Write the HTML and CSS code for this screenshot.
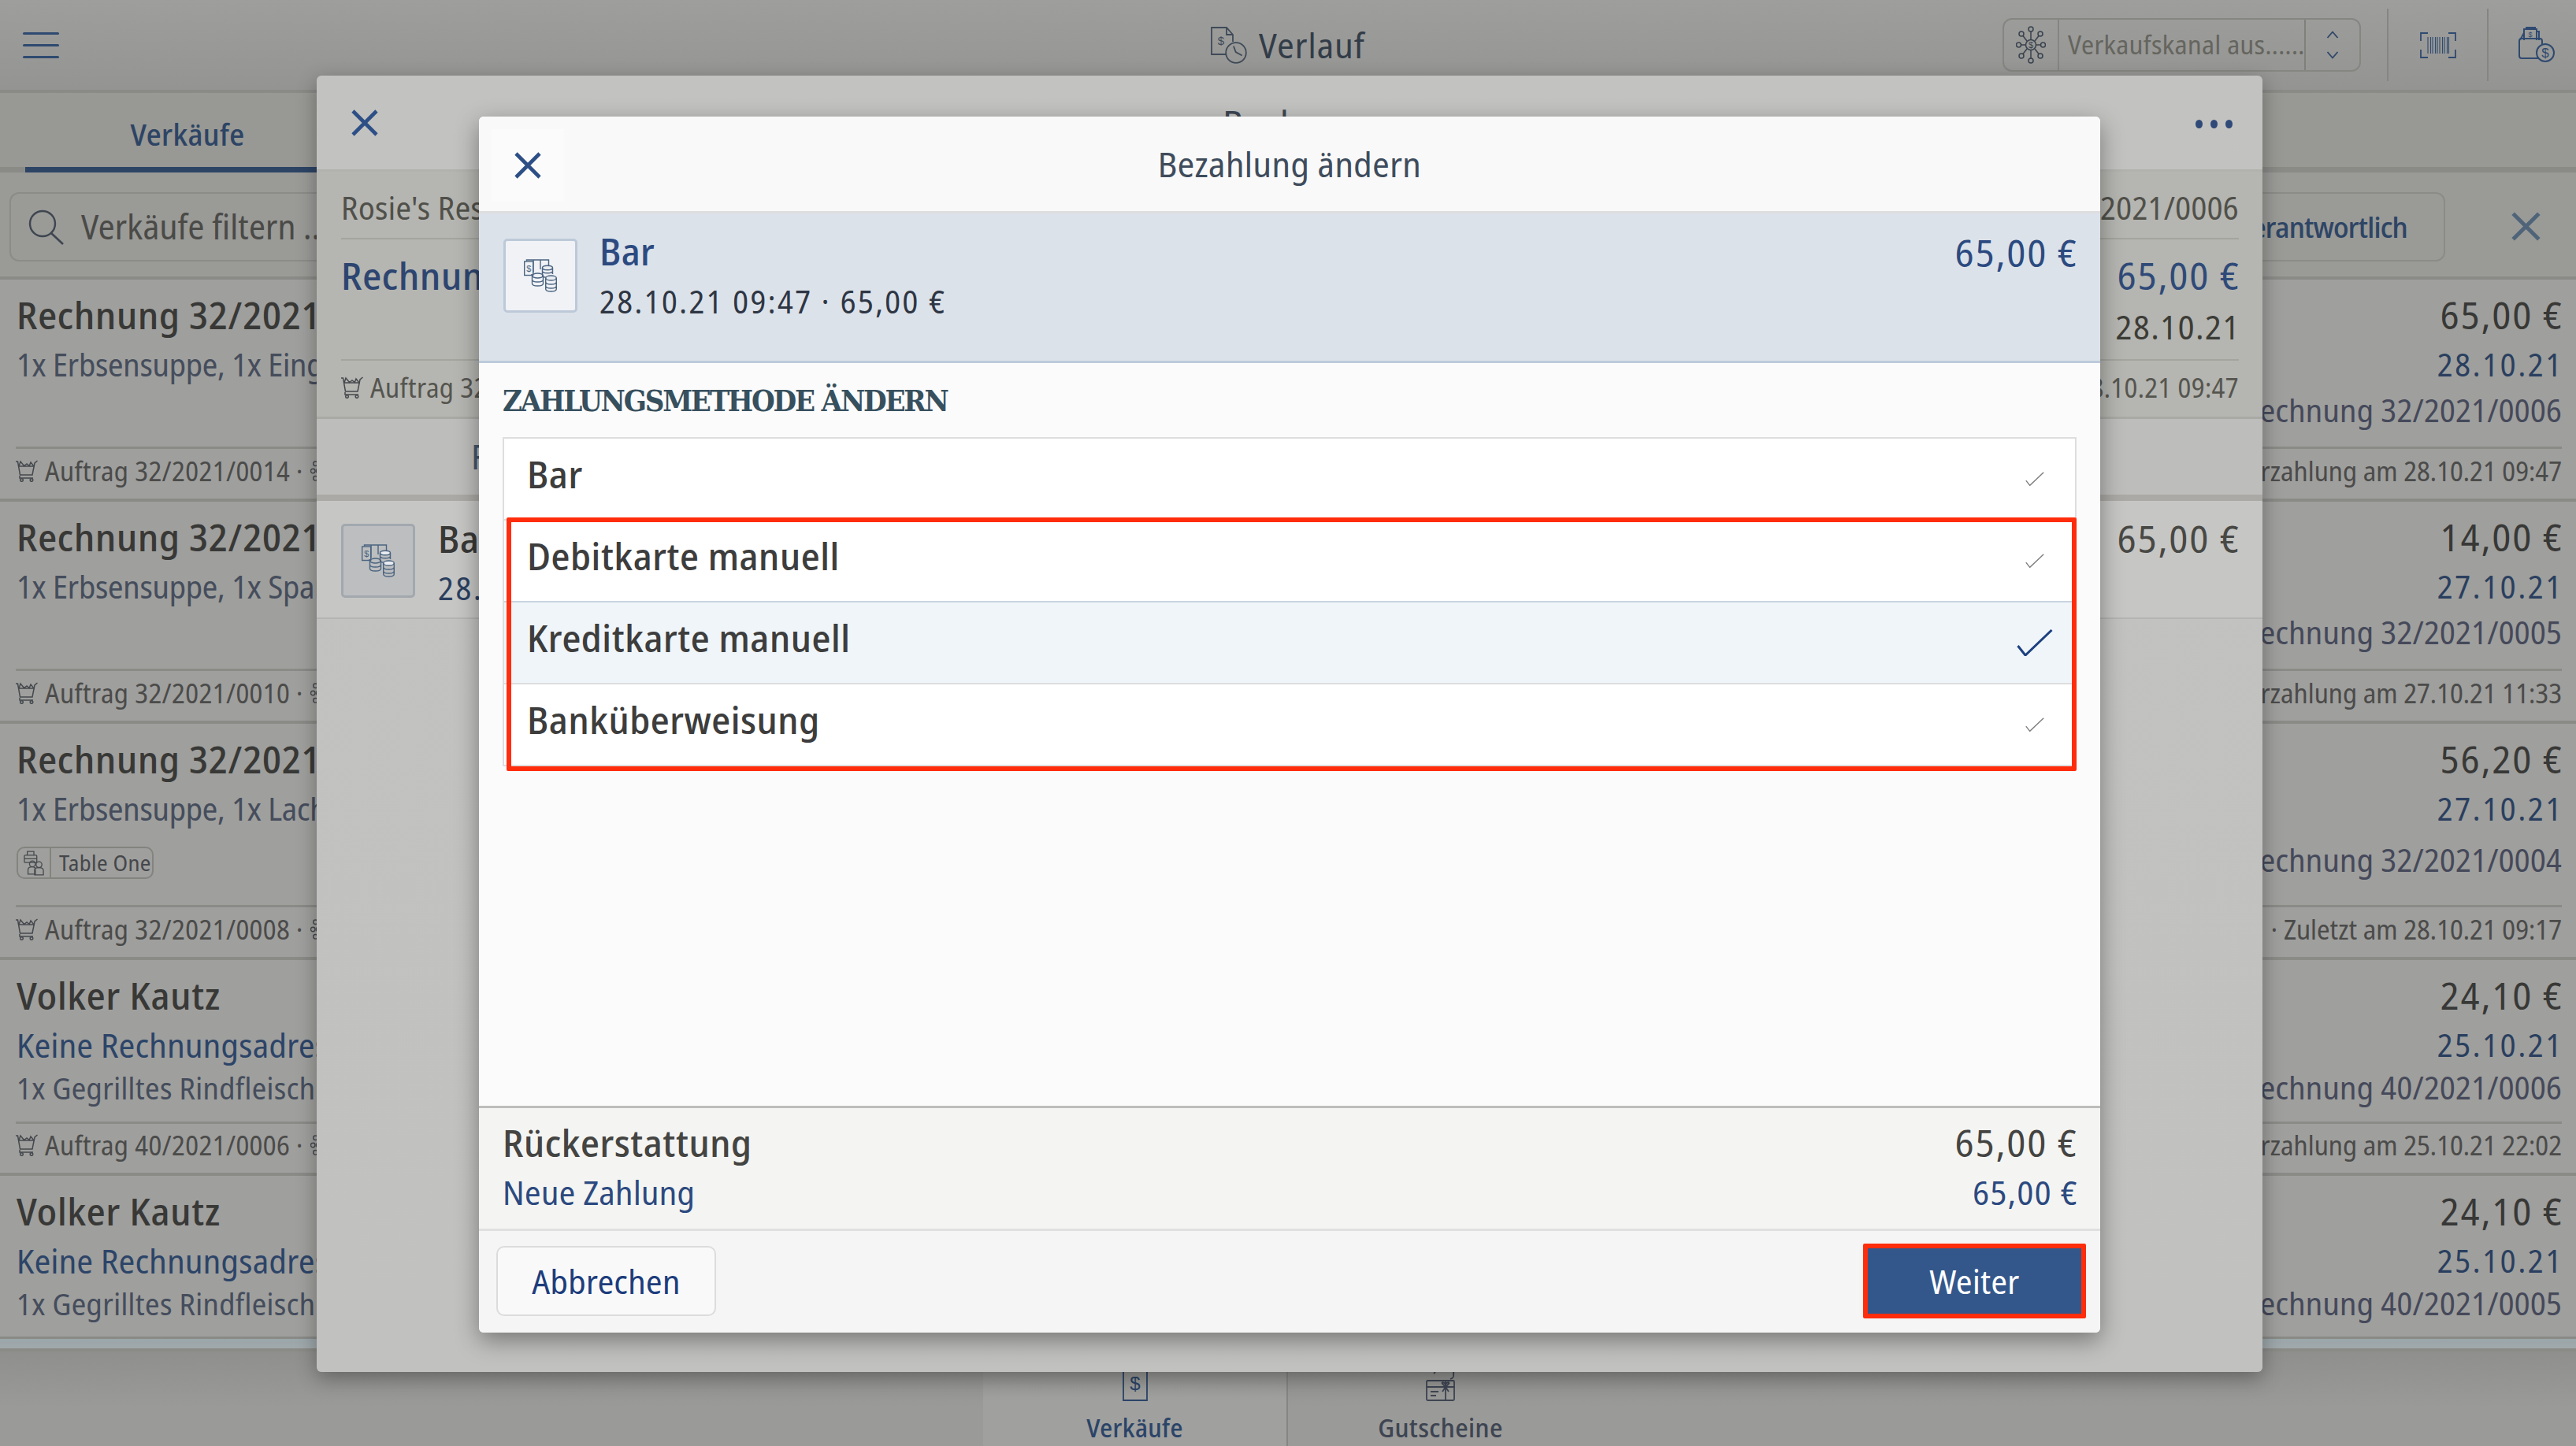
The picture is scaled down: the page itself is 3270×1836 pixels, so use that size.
FILE: index.html
```html
<!DOCTYPE html>
<html lang="de"><head><meta charset="utf-8"><title>Verlauf</title><link rel="stylesheet" href="styles.css"></head>
<body>
<svg class="defs" xmlns="http://www.w3.org/2000/svg">
  <symbol id="i-x" viewBox="0 0 34 34"><path d="M2 2 32 32M32 2 2 32" fill="none" stroke="currentColor" stroke-width="4.600"/></symbol>
  <symbol id="i-check" viewBox="0 0 46 34"><path d="M1.500 21 11 33 44.500 1" fill="none" stroke="currentColor" stroke-width="2.600"/></symbol>
  <symbol id="i-cash" viewBox="0 0 42 42">
    <g fill="none" stroke="currentColor" stroke-width="1.400">
      <path d="M3.500 2.500V1H31.500V10M11.500 20H9"/><path d="M12 1V17M21 1V13"/>
      <rect x="0.700" y="3" width="11" height="17.500"/>
      <ellipse cx="30" cy="11" rx="6.500" ry="2.800" fill="#e9ecf1"/><path d="M23.500 11V20.500C23.500 22 26 23.300 30 23.300M36.500 11V19M23.500 15C23.500 16.500 26 17.800 30 17.800S36.500 16.500 36.500 15"/>
      <ellipse cx="17.500" cy="21" rx="7" ry="3"/><path d="M10.500 21V31C10.500 33 13.500 34 17.500 34S24.500 33 24.500 31V21M10.500 26C10.500 28 13.500 29 17.500 29S24.500 28 24.500 26"/>
      <ellipse cx="34.500" cy="24" rx="6.800" ry="3" fill="#e9ecf1"/><path d="M27.700 24V38C27.700 40 30.500 41 34.500 41S41.300 40 41.300 38V24M27.700 29C27.700 31 30.500 32 34.500 32S41.300 31 41.300 29M27.700 34C27.700 36 30.500 37 34.500 37S41.300 36 41.300 34"/>
    </g>
    <text x="6.200" y="15.500" class="dollar" font-size="11" text-anchor="middle" fill="currentColor">$</text>
  </symbol>
  <symbol id="i-cart" viewBox="0 0 28 28">
    <g fill="none" stroke="currentColor" stroke-width="1.500"><path d="M0 2H2.500L5.500 19H21L24 4 27.500 1"/><path d="M3 8H24M5 20V23H22"/><circle cx="7.500" cy="25.500" r="1.800"/><circle cx="20" cy="25.500" r="1.800"/><path d="M4 8 6 2 11 8M10 8 14 5 18 8M17 8 19 3 23 8"/></g>
  </symbol>
  <symbol id="i-flow" viewBox="0 0 14 28"><g fill="none" stroke="currentColor" stroke-width="1.500"><circle cx="7" cy="4" r="3"/><circle cx="3.500" cy="14" r="3"/><circle cx="11" cy="14" r="3"/><circle cx="7" cy="24" r="3"/></g></symbol>
  <symbol id="i-table" viewBox="0 0 28 34"><g fill="none" stroke="currentColor" stroke-width="1.400"><rect x="1" y="6" width="17" height="10" rx="1"/><path d="M5 6V1H14V6M1 11H18"/><circle cx="12" cy="18" r="4"/><circle cx="21" cy="19" r="4"/><path d="M6 32V26C6 23 9 22 12 22S16 23 16 26V32ZM15 33V26C15 24 18 23 21 23S27 24 27 27V33Z"/></g></symbol>
  <symbol id="i-hub" viewBox="0 0 38 48"><g fill="none" stroke="currentColor" stroke-width="1.500"><circle cx="19" cy="24" r="6.500"/><circle cx="19" cy="4" r="3"/><circle cx="19" cy="44" r="3"/><circle cx="3.500" cy="24" r="3"/><circle cx="34.500" cy="24" r="3"/><circle cx="7" cy="10" r="3"/><circle cx="31" cy="10" r="3"/><circle cx="7" cy="38" r="3"/><circle cx="31" cy="38" r="3"/><path d="M19 7V17.500M19 30.500V41M6.500 24H12.500M25.500 24H31.500M9 12.500 14 19M29 12.500 24 19M9 35.500 14 29M29 35.500 24 29"/></g><text x="19" y="28" class="dollar" font-size="11" text-anchor="middle" fill="currentColor">$</text></symbol>
  <symbol id="i-wallet" viewBox="0 0 46 46"><g fill="none" stroke="currentColor" stroke-width="2"><path d="M7 17V3H23V17M10 3V1H22"/><rect x="1" y="15" width="29" height="25" rx="3"/><path d="M2 16C5 13 6 8 7 8M24 6H26V17"/><circle cx="34" cy="33" r="11" fill="#9a9a98"/></g><text x="34" y="39" class="dollar" font-size="17" text-anchor="middle" fill="currentColor">$</text><text x="15" y="13" class="dollar" font-size="9" text-anchor="middle" fill="currentColor">$</text></symbol>
  <symbol id="i-gift" viewBox="0 0 38 50"><g fill="none" stroke="currentColor" stroke-width="1.800"><rect x="1" y="24" width="35" height="25" rx="1.500"/><path d="M1 32H36M25 24V49M6 38H16M6 43H13M25 32 21 28C19 26 23 25 25 29 27 25 31 26 29 28ZM25 32 21 38M25 32 29 38"/><path d="M10 15C13 13 12 10 11 8M17 8H22M28 8V12M33 5C31 8 37 12 35 16 36 20 34 21 31 22"/></g></symbol>
</svg>
<div class="app">
  <header class="topbar">
    <div class="top-left"><span class="burger"><i></i><i></i><i></i></span></div>
    <div class="top-title">
      <svg class="ic-verlauf" viewBox="0 0 46 47"><g fill="none" stroke="currentColor" stroke-width="1.800"><path d="M19 35H1V1H20L28 10V19M20 1V10H28"/><circle cx="32" cy="33" r="12.800"/><path d="M32 24 32 32 38 39" transform="rotate(-20 32 33)"/></g><text x="13" y="23" class="dollar" font-size="15" text-anchor="middle" fill="currentColor">$</text></svg>
      <span>Verlauf</span>
    </div>
    <div class="top-right">
      <div class="channel">
        <span class="channel-ic"><svg class="ic-hub"><use href="#i-hub"/></svg></span>
        <span class="channel-txt">Verkaufskanal aus.......</span>
        <span class="channel-arrows"><svg class="ic-chev" viewBox="0 0 16 36"><path d="M1.500 9 8 1.500 14.500 9M1.500 27 8 34.500 14.500 27" fill="none" stroke="currentColor" stroke-width="1.800"/></svg></span>
      </div>
      <span class="top-cell top-cell-scan">
        <svg class="ic-scan" viewBox="0 0 46 33"><path d="M1 11V1H10M36 1H45V11M1 22V32H10M36 32H45V22" fill="none" stroke="currentColor" stroke-width="1.800"/><path d="M10 6V27M13.500 6V27M16 6V27M19.500 6V27M22 6V27M25 6V27M28.500 6V27M31 6V27M34.500 6V27M36.500 6V27" stroke="currentColor" stroke-width="1.100"/></svg>
      </span>
      <span class="top-cell top-cell-wallet"><svg class="ic-wallet"><use href="#i-wallet"/></svg></span>
    </div>
  </header>
  <nav class="tabs"><span class="tab">Verkäufe</span></nav>
  <div class="searchrow">
    <div class="search">
      <svg class="ic-search" viewBox="0 0 46 46"><circle cx="19" cy="19" r="16" fill="none" stroke="currentColor" stroke-width="2.400"/><path d="M30 31 45 45" stroke="currentColor" stroke-width="2.600"/></svg>
      <span>Verkäufe filtern ...</span>
    </div>
    <div class="search-right">
      <span class="owner">Verantwortlich</span>
      <svg class="ic-close-bg"><use href="#i-x"/></svg>
    </div>
  </div>

  <article class="row">
    <div class="row-top">
      <div class="col"><div class="t">Rechnung 32/2021/0006</div><div class="s">1x Erbsensuppe, 1x Eingelegter Lachs</div></div>
      <div class="col col-r"><div class="t">65,00 €</div><div class="s date">28.10.21</div><div class="s inv">Rechnung 32/2021/0006</div></div>
    </div>
    <div class="foot"><span class="foot-l"><svg class="ic-cart"><use href="#i-cart"/></svg>Auftrag 32/2021/0014 · <svg class="ic-flow"><use href="#i-flow"/></svg> Lieferung</span><span>Vorzahlung am 28.10.21 09:47</span></div>
  </article>
  <article class="row">
    <div class="row-top">
      <div class="col"><div class="t">Rechnung 32/2021/0005</div><div class="s">1x Erbsensuppe, 1x Spargelsuppe</div></div>
      <div class="col col-r"><div class="t">14,00 €</div><div class="s date">27.10.21</div><div class="s inv">Rechnung 32/2021/0005</div></div>
    </div>
    <div class="foot"><span class="foot-l"><svg class="ic-cart"><use href="#i-cart"/></svg>Auftrag 32/2021/0010 · <svg class="ic-flow"><use href="#i-flow"/></svg> Lieferung</span><span>Vorzahlung am 27.10.21 11:33</span></div>
  </article>
  <article class="row row-chip">
    <div class="row-top">
      <div class="col"><div class="t">Rechnung 32/2021/0004</div><div class="s">1x Erbsensuppe, 1x Lachs</div><div class="chip"><span class="chip-ic"><svg class="ic-table"><use href="#i-table"/></svg></span><span class="chip-txt">Table One</span></div></div>
      <div class="col col-r"><div class="t">56,20 €</div><div class="s date">27.10.21</div><div class="s inv inv-low">Rechnung 32/2021/0004</div></div>
    </div>
    <div class="foot"><span class="foot-l"><svg class="ic-cart"><use href="#i-cart"/></svg>Auftrag 32/2021/0008 · <svg class="ic-flow"><use href="#i-flow"/></svg> Lieferung</span><span>· Zuletzt am 28.10.21 09:17</span></div>
  </article>
  <article class="row row-cust">
    <div class="row-top">
      <div class="col"><div class="t">Volker Kautz</div><div class="s link">Keine Rechnungsadresse</div><div class="s items">1x Gegrilltes Rindfleisch</div></div>
      <div class="col col-r"><div class="t">24,10 €</div><div class="s date">25.10.21</div><div class="s items">Rechnung 40/2021/0006</div></div>
    </div>
    <div class="foot foot-tight"><span class="foot-l"><svg class="ic-cart"><use href="#i-cart"/></svg>Auftrag 40/2021/0006 · <svg class="ic-flow"><use href="#i-flow"/></svg> Lieferung</span><span>Vorzahlung am 25.10.21 22:02</span></div>
  </article>
  <article class="row row-last">
    <div class="row-top">
      <div class="col"><div class="t">Volker Kautz</div><div class="s link">Keine Rechnungsadresse</div><div class="s items">1x Gegrilltes Rindfleisch</div></div>
      <div class="col col-r"><div class="t">24,10 €</div><div class="s date">25.10.21</div><div class="s items">Rechnung 40/2021/0005</div></div>
    </div>
    <div class="strip"></div>
  </article>

  <nav class="bottomnav">
    <div class="nav-item nav-on">
      <svg class="ic-doc" viewBox="0 0 32 50"><path d="M1 1H24L31 8V49H1Z M24 1V8H31" fill="none" stroke="currentColor" stroke-width="1.800"/><text x="16" y="36" class="dollar" font-size="24" text-anchor="middle" fill="currentColor">$</text></svg>
      <span>Verkäufe</span>
    </div>
    <div class="nav-item">
      <svg class="ic-gift"><use href="#i-gift"/></svg>
      <span>Gutscheine</span>
    </div>
  </nav>
</div>

<section class="sheet-back">
  <header class="back-head">
    <svg class="ic-close"><use href="#i-x"/></svg>
    <span class="back-title">Buchung</span>
    <span class="dots"><i></i><i></i><i></i></span>
  </header>
  <div class="back-info">
    <div class="back-line back-line1"><span>Rosie's Restaurant</span><span>Rechnung 32/2021/0006</span></div>
    <div class="back-line back-line2">
      <span class="back-name">Rechnung 32/2021/0006</span>
      <div class="col-r back-sum"><div class="back-amt">65,00 €</div><div class="back-date">28.10.21</div></div>
    </div>
    <div class="back-line back-line3"><span class="foot-l"><svg class="ic-cart"><use href="#i-cart"/></svg>Auftrag 32/2021/0014</span><span>Bezahlt am 28.10.21 09:47</span></div>
  </div>
  <div class="back-tabs"><span>Fakturen</span></div>
  <div class="back-pay">
    <span class="paybox paybox-dim"><svg class="ic-cash"><use href="#i-cash"/></svg></span>
    <div class="back-pay-txt"><div class="t">Bar</div><div class="s date">28.10.21 09:47 · 65,00 €</div></div>
    <div class="t back-pay-amt">65,00 €</div>
  </div>
</section>

<section class="sheet">
  <header class="sheet-head">
    <span class="close-btn"><svg class="ic-close"><use href="#i-x"/></svg></span>
    <span class="sheet-title">Bezahlung ändern</span>
  </header>
  <div class="banner">
    <span class="paybox"><svg class="ic-cash"><use href="#i-cash"/></svg></span>
    <div class="banner-txt"><div class="banner-name">Bar</div><div class="banner-date">28.10.21 09:47 · 65,00 €</div></div>
    <div class="banner-amt">65,00 €</div>
  </div>
  <div class="methods">
    <h2 class="methods-h">ZAHLUNGSMETHODE ÄNDERN</h2>
    <div class="list">
      <div class="opt"><span>Bar</span><svg class="ck"><use href="#i-check"/></svg></div>
      <div class="opt"><span>Debitkarte manuell</span><svg class="ck"><use href="#i-check"/></svg></div>
      <div class="opt opt-on"><span>Kreditkarte manuell</span><svg class="ck-on" viewBox="0 0 46 34"><path d="M1.500 21 11 33 44.500 1" fill="none" stroke="currentColor" stroke-width="3"/></svg></div>
      <div class="opt"><span>Banküberweisung</span><svg class="ck"><use href="#i-check"/></svg></div>
      <div class="redbox"></div>
    </div>
  </div>
  <div class="summary">
    <div class="sum-line sum-a"><span class="sum-label">Rückerstattung</span><span class="sum-num">65,00 €</span></div>
    <div class="sum-line sum-b"><span>Neue Zahlung</span><span class="sum-num">65,00 €</span></div>
  </div>
  <div class="actions">
    <button class="btn">Abbrechen</button>
    <button class="btn-primary">Weiter</button>
  </div>
</section>
</body></html>
```
FILE: styles.css
```css
*{box-sizing:border-box}
html,body{margin:0;padding:0}
body{width:3270px;height:1836px;overflow:hidden;position:relative;background:#9c9c9a;
  font-family:"Noto Sans Display","Noto Sans",sans-serif;font-stretch:87.5%;letter-spacing:.4px;color:#3a3a38;white-space:nowrap}
svg{display:block;flex:none}
.defs{display:none}
.dollar{font-family:"Liberation Sans",sans-serif;letter-spacing:0}

.app{display:flex;flex-direction:column;height:1836px;width:3270px}
.topbar{height:118px;flex:none;display:grid;grid-template-columns:1fr auto 1fr;align-items:center;
  background:linear-gradient(#9e9e9c,#949492);border-bottom:4px solid #8a8a87}
.burger{display:flex;flex-direction:column;gap:12px;margin-left:29px;width:46px}
.burger i{height:3px;background:#2f4a70;border-radius:2px}
.top-title{display:flex;align-items:center;gap:15px;font-size:44px;color:#323c48;letter-spacing:1.1px}
.ic-verlauf{width:46px;height:47px;color:#3e4a58}
.top-right{display:flex;justify-content:flex-end;align-items:center;padding-right:27px;height:114px}
.channel{width:455px;height:68px;border:2px solid #858582;border-radius:12px;display:flex;align-items:stretch;margin-right:33px}
.channel-ic{width:70px;border-right:2px solid #858582;display:flex;align-items:center;justify-content:center}
.ic-hub{width:38px;height:48px;color:#38424e}
.channel-txt{width:313px;overflow:hidden;font-size:33px;line-height:64px;color:#65655e;padding-left:11px;border-right:2px solid #7f7f7c}
.channel-arrows{flex:1;display:flex;align-items:center;justify-content:center}
.ic-chev{width:16px;height:36px;color:#2f4668}
.top-cell{height:92px;display:flex;align-items:center;border-left:2px solid #858582}
.top-cell-scan{width:127px;justify-content:center}
.top-cell-wallet{width:86px;justify-content:flex-end}
.ic-scan{width:46px;height:33px;color:#2f4a70}
.ic-wallet{width:46px;height:46px;color:#2f4a70}

.tabs{height:101px;flex:none;background:#989894;border-bottom:7px solid #8a8a87;display:flex;padding-left:32px}
.tab{width:412px;height:101px;border-bottom:7px solid #2d4465;color:#2d4465;font-size:38px;font-weight:500;text-align:center;line-height:104px}
.searchrow{height:136px;flex:none;background:#9a9a97;border-bottom:4px solid #8a8a87;display:flex;justify-content:space-between;align-items:center;padding:5px 44px 0 12px}
.search{width:900px;height:88px;border:2px solid #8b8b88;border-radius:12px;display:flex;align-items:center;padding-left:21px;gap:22px;font-size:43px;letter-spacing:.15px;color:#4a4a47}
.ic-search{width:46px;height:46px;color:#3e4650}
.search-right{display:flex;align-items:center;gap:83px}
.owner{height:88px;border:2px solid #8b8b88;border-radius:12px;padding:0 46px;font-size:37px;letter-spacing:-.8px;font-weight:500;line-height:84px;color:#2e4565}
.ic-close-bg{width:39px;height:37px;color:#4f6479}

.row{height:282px;flex:none;background:#9f9f9d;border-bottom:4px solid #8a8a87;padding:0 18px 0 21px}
.row-chip{height:300px}
.row-cust{height:274px}
.row-last{height:223px;flex:none;border-bottom:4px solid #8a8a87;padding-bottom:0}
.row-top{height:212px;display:flex;justify-content:space-between}
.row-chip .row-top{height:230px}
.row-cust .row-top{height:205px}
.row-last .row-top{height:204px}
.col{display:flex;flex-direction:column;padding-top:15px}
.col-r{display:flex;flex-direction:column;align-items:flex-end}
.t{font-size:48px;line-height:60px;font-weight:500;letter-spacing:.8px;color:#383836}
.col-r>.t{font-weight:400;letter-spacing:2.2px;margin-right:-2px}
.s{font-size:40px;line-height:48px;margin-top:9px;letter-spacing:-.2px;color:#454d5c}
.date,.col-r .date{color:#2a3f5f;letter-spacing:2.8px;margin-right:-2px}
.inv{margin-top:10px}
.inv-low{margin-top:17px}
.items{margin-top:6px;font-size:38px;letter-spacing:.4px}
.link{color:#2c4468;font-size:42px;margin-top:9px;letter-spacing:.4px}
.col-r .s.inv,.col-r .s.items{color:#45495a;font-size:40px;letter-spacing:.3px}
.foot{height:66px;margin-left:-1px;border-top:3px solid #8a8a87;display:flex;justify-content:space-between;align-items:center;padding:0 0 7px 0;font-size:34px;letter-spacing:.05px;color:#4b4b4a}
.foot-tight{height:65px;padding-bottom:9px}
.foot-l{display:flex;align-items:center;gap:9px;letter-spacing:.4px}
.ic-cart{width:28px;height:28px;color:#45494e}
.ic-flow{width:13px;height:28px;color:#45494e}
.chip{display:flex;align-items:stretch;height:41px;width:174px;margin-top:24px;border:2px solid #83837f;border-radius:10px}
.chip-ic{width:42px;border-right:2px solid #83837f;display:flex;align-items:center;justify-content:center}
.ic-table{width:26px;height:32px;color:#45494e}
.chip-txt{font-size:28px;line-height:37px;padding-left:10px;color:#45474b}
.strip{height:15px;margin:0 -18px 0 -21px;border-top:3px solid #8a8a87;background:linear-gradient(#9aa6aa,#a0a8ab)}

.bottomnav{flex:1;display:grid;grid-template-columns:387px 387px;justify-content:center;background:linear-gradient(#8f8f8d,#9a9a98 60%)}
.nav-item{display:flex;flex-direction:column;align-items:center;justify-content:flex-end;padding-bottom:1px;font-size:33px;line-height:44px;font-weight:500;color:#3e4552}
.nav-on{color:#2b4468;font-size:32px;background:linear-gradient(#90908e,#a0a09e 50%);border-right:2px solid #858583}
.ic-doc{width:32px;height:50px;margin-bottom:12px;color:#2b4468}
.ic-gift{width:38px;height:50px;margin-bottom:12px;color:#3e4552}

.sheet-back{position:absolute;left:402px;top:96px;width:2470px;height:1646px;background:linear-gradient(#c2c2c0,#c1c1bf);border-radius:6px;box-shadow:0 8px 26px rgba(0,0,0,.32);overflow:hidden;color:#45453f}
.back-head{height:122px;display:grid;grid-template-columns:1fr auto 1fr;align-items:center;padding:0 38px 0 44px;border-bottom:3px solid #b1b1ae}
.ic-close{width:34px;height:34px;color:#2d4f86}
.back-title{font-size:46px;letter-spacing:1.2px;color:#3c4552}
.dots{display:flex;gap:10px;justify-content:flex-end;padding-top:3px}
.dots i{width:9px;height:11px;border-radius:50%;background:#2f4a78}
.back-info{height:314px;background:#b5b5b1;padding:0 30px 0 31px;border-bottom:3px solid #a9a9a5}
.back-line{display:flex;justify-content:space-between;border-bottom:2px solid #a5a59f}
.back-line1{height:86px;align-items:center;padding-top:6px;font-size:40px;color:#50504a}
.back-line2{height:154px;padding-top:16px}
.back-name{font-size:48px;font-weight:500;line-height:60px;letter-spacing:.8px;color:#2d4570}
.back-amt{font-size:48px;line-height:60px;letter-spacing:2.2px;margin-right:-2px;color:#2f4a78}
.back-date{font-size:42px;line-height:56px;margin-top:7px;letter-spacing:1.7px;margin-right:-2px;color:#3c3c36}
.back-line3{height:72px;align-items:center;border-bottom:0;padding-bottom:4px;font-size:34px;color:#55554f}
.back-tabs{height:104px;background:#bdbdbb;border-bottom:8px solid #aaa9a5;padding-left:196px;font-size:44px;line-height:94px;color:#45546a}
.back-pay{height:150px;background:#c6c6c4;border-bottom:2px solid #b4b4b2;display:flex;padding:29px 30px 0 31px}
.paybox{width:94px;height:94px;border:3px solid #bdc9d8;border-radius:5px;background:#f0f2f6;display:flex;align-items:center;justify-content:center;flex:none}
.ic-cash{width:42px;height:42px;color:#4b6480}
.paybox-dim{background:#bcbebf;border-color:#a2a8ae}
.back-pay-txt{margin-left:29px;margin-top:-11px}
.back-pay-txt .s{margin-top:9px}
.back-pay-amt{margin-left:auto;margin-top:-11px;margin-right:-2px;font-weight:400;letter-spacing:2.2px;color:#484844}

.sheet{position:absolute;left:608px;top:148px;width:2058px;height:1544px;display:flex;flex-direction:column;background:#fbfbfb;border-radius:6px;box-shadow:0 10px 30px rgba(0,0,0,.38)}
.sheet-head{height:123px;flex:none;background:#f9f9f9;border-bottom:3px solid #dedede;border-radius:6px 6px 0 0;display:flex;align-items:center;justify-content:center;position:relative}
.close-btn{position:absolute;left:16px;top:16px;width:92px;height:92px;background:#fbfbfb;display:flex;align-items:center;justify-content:center}
.sheet-title{font-size:44px;color:#3f4c5c;letter-spacing:.5px}
.banner{height:190px;flex:none;background:#dce2ea;border-bottom:3px solid #bccadb;display:flex;align-items:flex-start;padding:32px 30px 0 31px}
.banner-txt{margin:-12px 0 0 28px}
.banner-name{font-size:48px;line-height:56px;font-weight:500;color:#2c4a80}
.banner-date{font-size:40px;line-height:48px;margin-top:12px;letter-spacing:2.5px;color:#2e3644}
.banner-amt{margin:-10px -2px 0 auto;font-size:48px;line-height:56px;letter-spacing:2.2px;color:#2c4a80}
.methods{flex:1;padding:26px 30px 0 30px}
.methods-h{margin:0 0 24px;height:44px;font:700 38px/44px "DejaVu Serif Condensed",serif;letter-spacing:-2.2px;color:#37505e}
.list{position:relative;background:#fff;border:2px solid #dedede;border-bottom:0}
.opt{height:104px;display:flex;align-items:center;justify-content:space-between;padding:0 28px 0 29px;border-bottom:2px solid #dedede;font-size:48px;font-weight:500;letter-spacing:.6px;color:#3d3d3d}
.opt span{padding-bottom:13px}
.opt-on{background:#f0f5f9;border-top:2px solid #c9d4e0;margin-top:-2px;height:106px}
.ck{width:24px;height:18px;margin-right:11px;color:#7c7c7c}
.ck-on{width:46px;height:34px;color:#1d4180}
.redbox{position:absolute;left:3px;right:-2px;top:100px;height:322px;border:6px solid #ff2d0b;border-radius:2px}
.summary{height:156px;flex:none;background:#f4f4f2;border-top:3px solid #bdbdbb;padding:17px 30px 0 30px}
.sum-line{display:flex;justify-content:space-between}
.sum-a{font-size:48px;line-height:54px;color:#444442}
.sum-label{font-weight:500;letter-spacing:.6px}
.sum-b{font-size:42px;line-height:48px;margin-top:12px;color:#2c4a80}
.sum-a .sum-num{letter-spacing:2.2px;margin-right:-2px}
.sum-b .sum-num{letter-spacing:1.5px;margin-right:-2px}
.actions{height:132px;flex:none;background:#f5f5f5;border-top:3px solid #e0e0e0;border-radius:0 0 6px 6px;display:flex;align-items:center;justify-content:space-between;padding:0 18px 2px 22px}
.btn,.btn-primary{font-family:inherit;font-stretch:inherit;letter-spacing:.4px;font-size:42px;padding:0}
.btn{width:279px;height:89px;background:#f9f9f9;border:2px solid #dcdcdc;border-radius:10px;color:#1d3d7c}
.btn-primary{width:283px;height:95px;background:#34578b;border:6px solid #ff2d0b;border-radius:2px;color:#fff}
```
